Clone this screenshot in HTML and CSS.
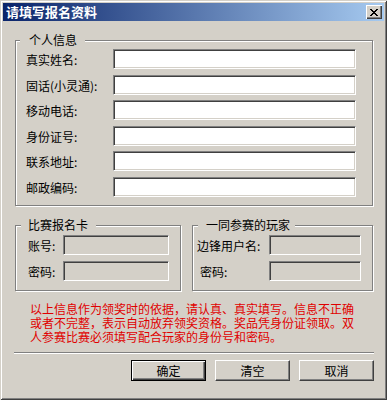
FILE: index.html
```html
<!DOCTYPE html>
<html lang="zh-CN">
<head>
    <meta charset="UTF-8">
    <meta name="viewport" content="width=device-width, initial-scale=1.0">
    <title>请填写报名资料</title>
    <link rel="stylesheet" href="styles.css">
</head>
<body>
    <div class="window">
        <div class="titlebar">
            <span class="title">请填写报名资料</span>
            <span class="close-btn">
                <svg width="8" height="7" viewBox="0 0 8 7">
                    <path d="M0 0h2v1h-2zM6 0h2v1h-2zM1 1h2v1h-2zM5 1h2v1h-2zM2 2h4v1h-4zM3 3h2v1h-2zM2 4h4v1h-4zM1 5h2v1h-2zM5 5h2v1h-2zM0 6h2v1h-2zM6 6h2v1h-2z" fill="#000"/>
                </svg>
            </span>
        </div>

        <div class="content">
            <div class="group group-personal">
                <div class="group-title">个人信息</div>
                <div class="form-grid personal-grid">
                    <label>真实姓名:</label><input class="edit" type="text">
                    <label>固话(小灵通):</label><input class="edit" type="text">
                    <label>移动电话:</label><input class="edit" type="text">
                    <label>身份证号:</label><input class="edit" type="text">
                    <label>联系地址:</label><input class="edit" type="text">
                    <label>邮政编码:</label><input class="edit" type="text">
                </div>
            </div>

            <div class="group-row">
                <div class="group group-card">
                    <div class="group-title">比赛报名卡</div>
                    <div class="form-grid card-grid">
                        <label>账号:</label><input class="edit" type="text" disabled>
                        <label>密码:</label><input class="edit" type="password" disabled>
                    </div>
                </div>
                <div class="group group-partner">
                    <div class="group-title">一同参赛的玩家</div>
                    <div class="form-grid partner-grid">
                        <label>边锋用户名:</label><input class="edit" type="text" disabled>
                        <label class="indent">密码:</label><input class="edit" type="password" disabled>
                    </div>
                </div>
            </div>

            <p class="notice">以上信息作为领奖时的依据，请认真、真实填写。信息不正确<br>或者不完整，表示自动放弃领奖资格。奖品凭身份证领取。双<br>人参赛比赛必须填写配合玩家的身份号和密码。</p>

            <div class="separator"></div>

            <div class="buttons">
                <button class="btn btn-default">确定</button>
                <button class="btn">清空</button>
                <button class="btn">取消</button>
            </div>
        </div>
    </div>
</body>
</html>
```

FILE: styles.css
```css
body {
    margin: 0;
    font-family: "Noto Sans CJK SC", "Liberation Sans", sans-serif;
    font-size: 12px;
    color: #000;
    background: #d4d0c8;
}
.window {
    box-sizing: border-box;
    width: 387px;
    height: 400px;
    padding: 3px;
    background: #d4d0c8;
    box-shadow: inset 1px 1px #d4d0c8, inset -1px -1px #404040, inset 2px 2px #fff, inset -2px -2px #808080;
}
.titlebar {
    display: flex;
    align-items: center;
    justify-content: space-between;
    height: 18px;
    padding-left: 3px;
    padding-right: 2px;
    background: linear-gradient(to right, #0a246a, #a6caf0);
}
.title {
    color: #fff;
    font-weight: bold;
    font-size: 13px;
    line-height: 18px;
}
.close-btn {
    box-sizing: border-box;
    display: flex;
    align-items: center;
    justify-content: center;
    width: 16px;
    height: 14px;
    background: #d4d0c8;
    box-shadow: inset 1px 1px #fff, inset -1px -1px #404040, inset -2px -2px #808080;
}
.close-btn svg {
    display: block;
    margin-left: 0;
}
.content {
    padding: 0 11px 0 12px;
}
.group {
    position: relative;
    box-sizing: border-box;
    border: 1px solid #808080;
    box-shadow: inset 1px 1px #fff, 1px 1px #fff;
}
.group-title {
    position: absolute;
    top: -9px;
    left: 4px;
    padding: 0 8px 0 9px;
    line-height: 16px;
    background: #d4d0c8;
}
.group-personal {
    margin-top: 19px;
    padding: 8px 16px 8px 10px;
}
.form-grid {
    display: grid;
    align-items: center;
}
.form-grid label {
    white-space: nowrap;
    line-height: 14px;
    padding-top: 2px;
}
.personal-grid {
    grid-template-columns: 87px 243px;
    row-gap: 5.6px;
}
.group-row {
    display: flex;
    gap: 11px;
    margin-top: 19px;
}
.group-card {
    width: 166px;
    padding: 9px 11px 9px 12px;
}
.group-card .group-title {
    left: 5px;
    padding: 0 8px 0 7px;
}
.card-grid {
    grid-template-columns: 35px 106px;
    row-gap: 6px;
}
.group-partner {
    width: 181px;
    padding: 9px 11px 9px 4px;
}
.group-partner .group-title {
    left: 5px;
    padding: 0 5px 0 8px;
}
.partner-grid {
    grid-template-columns: 72px 92px;
    row-gap: 6px;
}
.indent {
    padding-left: 3px;
}
.edit {
    box-sizing: border-box;
    display: block;
    width: 100%;
    height: 20px;
    margin: 0;
    padding: 0 2px;
    font: inherit;
    background: #fff;
    border: 1px solid;
    border-color: #808080 #fff #fff #808080;
    box-shadow: inset 1px 1px #404040, inset -1px -1px #d4d0c8;
    outline: none;
}
.edit:disabled {
    background: #d4d0c8;
}
.notice {
    margin: 11px 0 0 15px;
    color: #e00000;
    line-height: 14px;
    white-space: nowrap;
}
.separator {
    height: 1px;
    margin: 8px -1px 0 -1px;
    border-top: 1px solid #808080;
    border-bottom: 1px solid #fff;
    height: 0;
}
.buttons {
    display: flex;
    justify-content: flex-end;
    gap: 9px;
    margin: 6px -1px 0 0;
}
.btn {
    box-sizing: border-box;
    width: 75px;
    height: 21px;
    padding: 0;
    font: inherit;
    line-height: 17px;
    color: #000;
    background: #d4d0c8;
    border: 1px solid;
    border-color: #fff #404040 #404040 #fff;
    box-shadow: inset -1px -1px #808080;
}
.btn-default {
    border: 1px solid #000;
    box-shadow: inset 1px 1px #fff, inset -1px -1px #404040, inset -2px -2px #808080;
}
```
